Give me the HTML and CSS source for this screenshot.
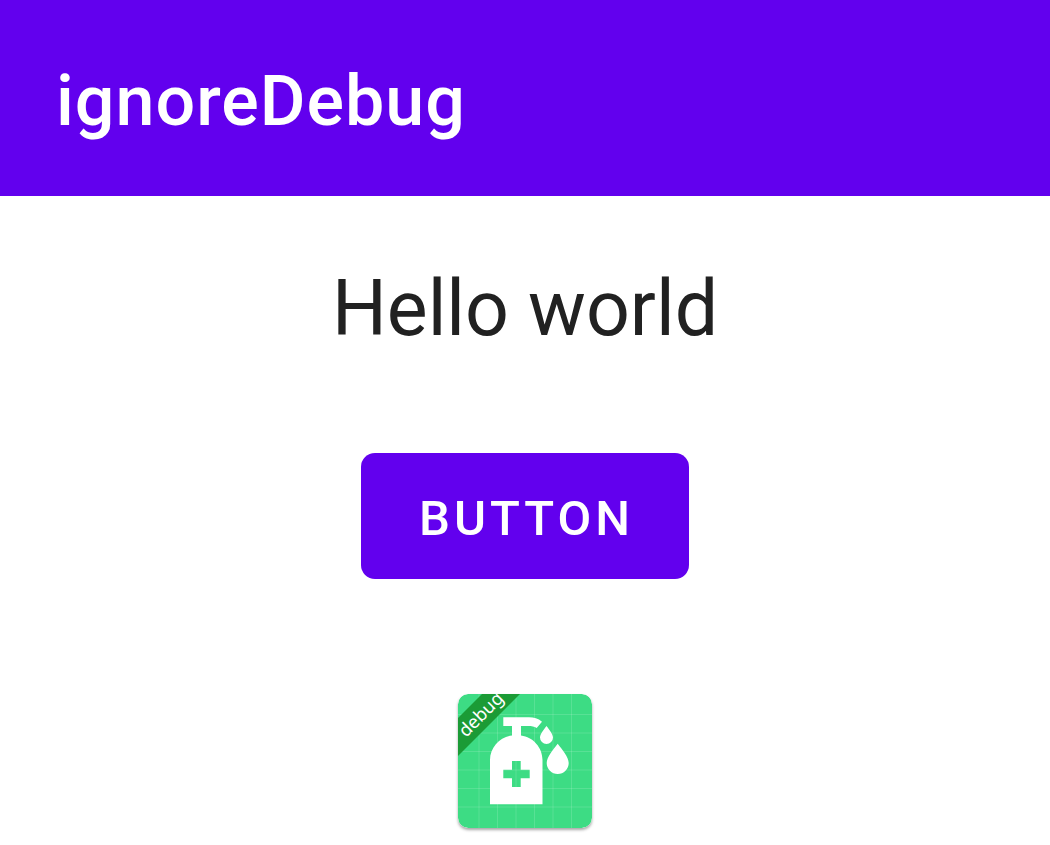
FILE: index.html
```html
<!DOCTYPE html>
<html lang="en">
<head>
  <meta charset="utf-8">
  <meta name="viewport" content="width=device-width, initial-scale=1">
  <title>ignoreDebug</title>
  <link rel="stylesheet" href="styles.css">
</head>
<body>
  <header class="app-bar">
    <h1 class="app-title">ignoreDebug</h1>
  </header>
  <main class="content">
    <p class="greeting">Hello world</p>
    <button class="button" type="button">BUTTON</button>
    <svg class="app-icon" viewBox="0 0 134 134" role="img" aria-label="App icon, debug build">
      <defs>
        <clipPath id="tile"><rect width="134" height="134" rx="10"/></clipPath>
      </defs>
      <g clip-path="url(#tile)">
        <rect width="134" height="134" fill="#3ddc84"/>
        <path d="M21 0V134M39.5 0V134M58 0V134M76.500 0V134M95 0V134M113.500 0V134M0 20.500H134M0 39H134M0 57.500H134M0 76H134M0 94.500H134M0 113H134" fill="none" stroke="#fff" stroke-opacity=".14" stroke-width="1"/>
        <path d="M24 0H62L0 62V24Z" fill="#1b9b36"/>
        <text class="ribbon-text" x="8" y="44" transform="rotate(-45 8 44)">debug</text>
        <path fill="#fff" fill-rule="evenodd" d="M45.300 23.300H71C76 23.300 80 24.500 84 27.700L78.700 34C76 32.500 74 32 70 32H63V41.500C75 43 84.500 53.500 84.500 66V110.300H32V66C32 53.500 42 43 54 41.500V32H45.300ZM54 67V75.700H45.300V84.300H54V93H62.700V84.300H71.700V75.700H62.700V67Z"/>
        <path fill="#fff" d="M88.500 32C91 35.500 95 40 95 43.500A6.500 6.500 0 0 1 82 43.500C82 40 86 35.500 88.500 32ZM99.700 49.700C104 55.500 110.700 63 110.700 69A11 11 0 0 1 88.700 69C88.700 63 95.400 55.500 99.700 49.700Z"/>
      </g>
    </svg>
  </main>
</body>
</html>
```
FILE: styles.css
```css
body {
  margin: 0;
  background: #fff;
  color: #212121;
  font-family: Roboto, "Liberation Sans", sans-serif;
}

.app-bar {
  padding: 60px 56px 54px;
  background: #6200ee;
  color: #fff;
}

.app-title {
  margin: 0;
  font-size: 70px;
  font-weight: 500;
  line-height: 82px;
  letter-spacing: 1px;
}

.content {
  display: flex;
  flex-direction: column;
  align-items: center;
  padding: 68px 56px 16px;
}

.greeting {
  margin: 0 0 99px;
  font-size: 77px;
  line-height: 90px;
}

.button {
  margin: 0 0 115px;
  padding: 37px 55px 31px 58px;
  border: 0;
  border-radius: 14px;
  background: #6200ee;
  color: #fff;
  font-family: inherit;
  font-size: 49px;
  font-weight: 500;
  line-height: 58px;
  letter-spacing: 4px;
}

.app-icon {
  width: 134px;
  height: 134px;
  border-radius: 10px;
  box-shadow: 0 2px 3px rgba(0, 0, 0, 0.35);
}

.ribbon-text {
  fill: #fff;
  font-family: "Noto Sans", sans-serif;
  font-size: 18px;
}
```
